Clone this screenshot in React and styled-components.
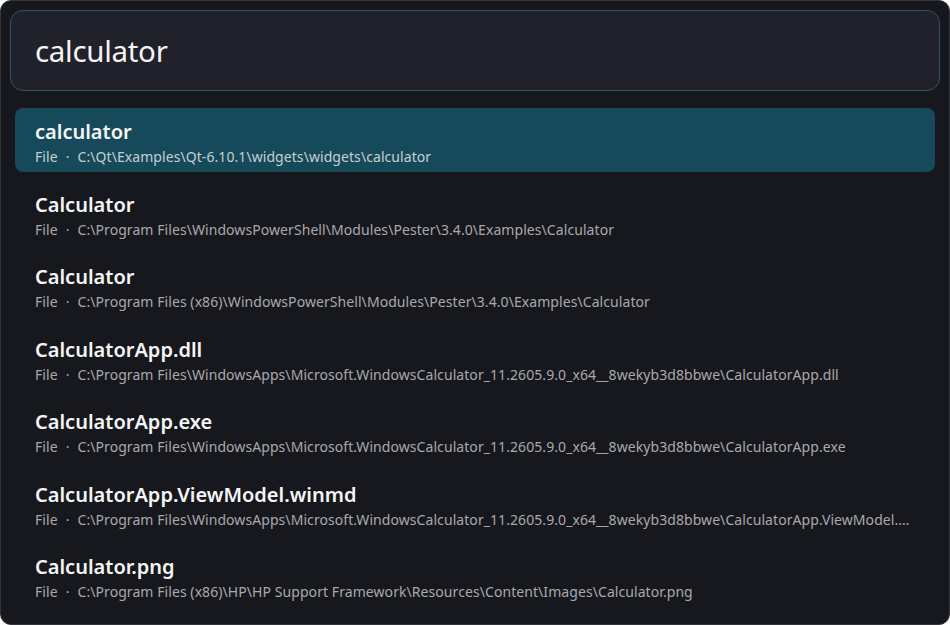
import React from "react";
import styled, { createGlobalStyle } from "styled-components";

const Global = createGlobalStyle`
  html, body {
    margin: 0;
    padding: 0;
    background: #ffffff;
  }
  body {
    font-family: "Noto Sans", "Open Sans", sans-serif;
  }
`;

const Window = styled.div`
  box-sizing: border-box;
  width: 950px;
  height: 625px;
  background: #17181d;
  border: 1px solid #34353b;
  border-radius: 11px;
  overflow: hidden;
  display: flex;
  flex-direction: column;
  padding: 9px 9px 0 9px;
`;

const SearchBox = styled.div`
  box-sizing: border-box;
  height: 81px;
  display: flex;
  align-items: center;
  padding: 0 24px;
  background: #20212a;
  border: 1.5px solid #2a5663;
  border-radius: 13px;
`;

const SearchText = styled.span`
  font-size: 29.5px;
  color: #f4f4f4;
  letter-spacing: -0.3px;
`;

const List = styled.div`
  display: flex;
  flex-direction: column;
  gap: 8.5px;
  padding: 17px 5px 0 5px;
`;

const Row = styled.div`
  box-sizing: border-box;
  height: 64px;
  padding: 11px 20px 0 20px;
  border-radius: 8px;
  background: ${(p) => (p.$active ? "#164a5a" : "transparent")};
  display: flex;
  flex-direction: column;
  gap: 3px;
`;

const Title = styled.div`
  font-size: 20px;
  line-height: 25px;
  font-weight: 600;
  color: #f5f5f5;
  white-space: nowrap;
`;

const Sub = styled.div`
  font-size: 14px;
  line-height: 19px;
  letter-spacing: 0.07px;
  color: ${(p) => (p.$active ? "#c4cfd3" : "#a9a9ac")};
  white-space: nowrap;
  overflow: hidden;
  text-overflow: ellipsis;
  max-width: 878px;
`;

const Dot = styled.span`
  margin: 0 8px 0 8px;
`;

const items = [
  { t: "calculator", p: "C:\\Qt\\Examples\\Qt-6.10.1\\widgets\\widgets\\calculator" },
  { t: "Calculator", p: "C:\\Program Files\\WindowsPowerShell\\Modules\\Pester\\3.4.0\\Examples\\Calculator" },
  { t: "Calculator", p: "C:\\Program Files (x86)\\WindowsPowerShell\\Modules\\Pester\\3.4.0\\Examples\\Calculator" },
  { t: "CalculatorApp.dll", p: "C:\\Program Files\\WindowsApps\\Microsoft.WindowsCalculator_11.2605.9.0_x64__8wekyb3d8bbwe\\CalculatorApp.dll" },
  { t: "CalculatorApp.exe", p: "C:\\Program Files\\WindowsApps\\Microsoft.WindowsCalculator_11.2605.9.0_x64__8wekyb3d8bbwe\\CalculatorApp.exe" },
  { t: "CalculatorApp.ViewModel.winmd", p: "C:\\Program Files\\WindowsApps\\Microsoft.WindowsCalculator_11.2605.9.0_x64__8wekyb3d8bbwe\\CalculatorApp.ViewModel.winmd" },
  { t: "Calculator.png", p: "C:\\Program Files (x86)\\HP\\HP Support Framework\\Resources\\Content\\Images\\Calculator.png" },
];

export default function App() {
  return (
    <>
      <Global />
      <Window>
        <SearchBox>
          <SearchText>calculator</SearchText>
        </SearchBox>
        <List>
          {items.map((it, i) => (
            <Row key={i} $active={i === 0}>
              <Title>{it.t}</Title>
              <Sub $active={i === 0}>
                File<Dot>·</Dot>{it.p}
              </Sub>
            </Row>
          ))}
        </List>
      </Window>
    </>
  );
}
